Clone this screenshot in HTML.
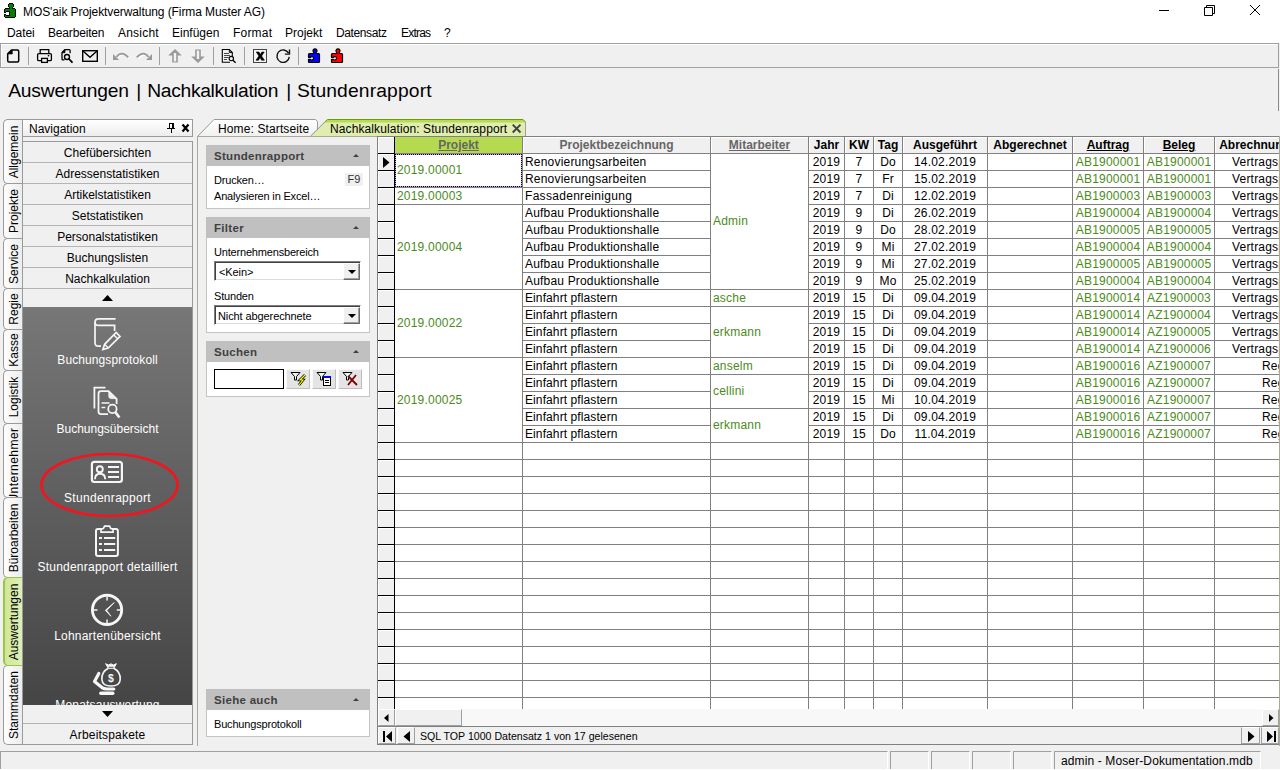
<!DOCTYPE html>
<html lang="de">
<head>
<meta charset="utf-8">
<title>MOS'aik Projektverwaltung (Firma Muster AG)</title>
<style>
*{box-sizing:border-box;margin:0;padding:0}
html,body{width:1280px;height:770px;overflow:hidden;background:#f0f0f0;font-family:"Liberation Sans",sans-serif;font-size:12px;color:#000}
.abs{position:absolute}
#app{position:relative;width:1280px;height:770px;overflow:hidden;background:#f0f0f0}
#titlebar{left:0;top:0;width:1280px;height:22px;background:#fff}
#titlebar .t{left:23px;top:4px;font-size:12px;line-height:16px;white-space:nowrap;letter-spacing:-0.09px}
#menubar{left:0;top:22px;width:1280px;height:21px;background:#fff}
#menubar span{position:absolute;top:3px;font-size:12px;line-height:16px;white-space:nowrap}
#toolbar{left:0;top:43px;width:1279px;height:25px;border:1px solid #a0a0a0;background:#f0f0f0;box-shadow:inset 1px 1px 0 #fff}
#toolbar .sep{position:absolute;top:3px;width:1px;height:17px;background:#a0a0a0}
#toolbar svg{position:absolute}
#heading{left:8px;top:78.6px;font-size:19.25px;line-height:24px;white-space:nowrap}
#heading span{position:absolute;top:0}
/* vertical tabs */
#vtabs{left:3px;top:119px;width:20px;height:626px}
.vt{position:absolute;left:0;width:20px;border:1px solid #9a9a9a;border-right:none;border-radius:5px 0 0 5px;background:linear-gradient(90deg,#fdfdfd,#ececec);overflow:hidden}
.vt span{position:absolute;left:50%;top:50%;white-space:nowrap;font-size:12px;line-height:14px;transform:translate(-50%,-50%) rotate(-90deg)}
.vt.act{background:linear-gradient(90deg,#cfe79a,#dff0b8);border-color:#9dc544;border-left:2px solid #9dc544}
/* nav */
#navhead{left:22px;top:119px;width:171px;height:18px;border:1px solid #9a9a9a;background:linear-gradient(#fff,#ededed);}
#navhead .t{left:6px;top:2px;line-height:14px;font-size:12px}
#navbody{left:22px;top:141px;width:171px;height:604px;border:1px solid #9a9a9a;background:#f0f0f0}
.nb{position:absolute;left:0;width:169px;height:21px;border-bottom:1px solid #b4b4b4;text-align:center;font-size:12px;line-height:22px;white-space:nowrap}
#dark{left:0;top:165px;width:169px;height:398px;background:linear-gradient(#777777,#454545);overflow:hidden}
.ni{position:absolute;left:0;width:169px;text-align:center;color:#fff;font-size:12px;line-height:14px;white-space:nowrap}
.dk svg{position:absolute}
/* tabs */
.tabtxt{position:absolute;font-size:12px;line-height:14px;white-space:nowrap;letter-spacing:0.12px}
/* content */
#content{left:197px;top:136px;width:1083px;height:610px;border-left:1px solid #aca899;border-top:1px solid #aca899}
.pn{position:absolute;left:206px;width:164px}
.pn .h{height:21px;background:#c0c0c0;color:#404040;font-weight:bold;font-size:11.5px;letter-spacing:0.3px;line-height:22px;padding-left:8px;position:relative}
.pn .h i{position:absolute;right:11px;top:9px;width:0;height:0;border:3px solid transparent;border-top:none;border-bottom:3px solid #404040}
.pn .b{background:#fff;border:1px solid #c4c4c4;border-top:none;position:relative}
.pl{position:absolute;left:7px;font-size:11px;line-height:14px;white-space:nowrap;letter-spacing:-0.18px}
.combo{position:absolute;left:7px;width:147px;height:20px;background:#fff;border:1px solid #808080;border-right-color:#fff;border-bottom-color:#fff;box-shadow:inset 1px 1px 0 #404040,inset -1px -1px 0 #dcdcdc}
.combo .t{position:absolute;left:4px;top:3px;letter-spacing:-0.1px;font-size:11px;line-height:14px;white-space:nowrap}
.combo .btn{position:absolute;right:0px;top:1px;width:17px;height:17px;background:#f0f0f0;border:1px solid #fff;border-right-color:#696969;border-bottom-color:#696969;box-shadow:inset -1px -1px 0 #a0a0a0}
.combo .btn i{position:absolute;left:4px;top:6px;width:0;height:0;border:4px solid transparent;border-bottom:none;border-top:4px solid #000}
.sbtn{position:absolute;top:7px;width:24px;height:20px;background:#e4e4e4;border:1px solid #f8f8f8;border-right-color:#bdbdbd;border-bottom-color:#bdbdbd}
/* grid */
#grid{left:377px;top:136px;width:903px;height:573px;background:#fff;border-left:1px solid #808080;border-top:1px solid #808080;overflow:hidden}
.hc{background:#f0f0f0;border-right:1px solid #808080;border-bottom:1px solid #808080;font-weight:bold;text-align:center;line-height:16px;font-size:12px;white-space:nowrap;overflow:hidden;box-shadow:inset 1px 1px 0 #fff}
.hc.hproj{background:#b5d94f;color:#666;box-shadow:none}
.hc.hgray{color:#666}
.hc.u span{text-decoration:underline}
.hsel{background:#f0f0f0;border-right:1px solid #000;width:17px !important;box-shadow:inset 1px 1px 0 #fff}
.vl{width:1px;background:#808080}
.hl{height:1px;background:#808080}
.rsel{background:#f0f0f0;border-right:1px solid #000;width:17px !important;box-shadow:inset 1px 1px 0 #fff}
.rselb{height:1px;background:#000}
.c{background:#fff;white-space:nowrap;overflow:hidden;font-size:12px;letter-spacing:0.2px}
.c.l{padding-left:2px}
.c.ctr{text-align:center}
.c.g{color:#4b8b1b}
.focus0{border:1px solid #c9a0ff}
.focus{border:1px dotted #000}
/* bottom */
#hscroll{left:378px;top:709px;width:901px;height:17px;background:#f8f8f8}
.sb{position:absolute;top:0;height:17px;background:#f0f0f0;border:1px solid #fff;border-right-color:#a0a0a0;border-bottom-color:#a0a0a0}
#recnav{left:377px;top:726px;width:903px;height:19px;border:1px solid #808080;border-left:1px solid #808080;background:#f0f0f0}
.rb{position:absolute;top:0px;height:17px;background:#f0f0f0;border:1px solid #fff;border-right-color:#a0a0a0;border-bottom-color:#a0a0a0}
#status{left:0;top:751px;width:1280px;height:18px}
.sp{position:absolute;top:0;height:18px;border-top:1px solid #a0a0a0;border-left:1px solid #a0a0a0;border-right:1px solid #fff}
</style>
</head>
<body>
<div id="app">
<div id="titlebar" class="abs">
<svg class="abs" style="left:4px;top:3px" width="12" height="15" viewBox="0 0 12 15" shape-rendering="crispEdges"><path d="M5 0h4v1h-4zM4 1h1v1h-1zM9 1h1v1h-1zM4 2h1v1h-1zM9 2h1v1h-1zM4 3h1v1h-1zM9 3h1v1h-1zM5 4h1v1h-1zM8 4h1v1h-1zM1 5h5v1h-5zM8 5h3v1h-3zM0 6h1v1h-1zM11 6h1v1h-1zM0 7h1v1h-1zM11 7h1v1h-1zM0 8h1v1h-1zM2 8h4v1h-4zM11 8h1v1h-1zM0 9h2v1h-2zM5 9h1v1h-1zM11 9h1v1h-1zM5 10h1v1h-1zM11 10h1v1h-1zM0 11h2v1h-2zM5 11h1v1h-1zM11 11h1v1h-1zM0 12h1v1h-1zM2 12h4v1h-4zM11 12h1v1h-1zM0 13h1v1h-1zM11 13h1v1h-1zM1 14h10v1h-10z" fill="#000"/><path d="M5 1h4v1h-4zM5 2h4v1h-4zM5 3h4v1h-4zM6 4h2v1h-2zM6 5h2v1h-2zM1 6h10v1h-10zM1 7h10v1h-10zM1 8h1v1h-1zM6 8h5v1h-5zM6 9h5v1h-5zM6 10h5v1h-5zM6 11h5v1h-5zM1 12h1v1h-1zM6 12h5v1h-5zM1 13h10v1h-10z" fill="#008000"/></svg>
<div class="t abs">MOS'aik Projektverwaltung (Firma Muster AG)</div>
<svg class="abs" style="left:1150px;top:0" width="130" height="22" viewBox="0 0 130 22" fill="none" stroke="#000" stroke-width="1"><path d="M9 10.5h10"/><path d="M54.5 7.5h8v8h-8z M56.5 7.5v-2h8v8h-2"/><path d="M100 5l10 10M110 5l-10 10"/></svg>
</div>
<div id="menubar" class="abs">
<span style="left:7px;letter-spacing:-0.06px">Datei</span><span style="left:48px;letter-spacing:-0.17px">Bearbeiten</span><span style="left:118px;letter-spacing:0.22px">Ansicht</span><span style="left:172px">Einfügen</span><span style="left:233px;letter-spacing:0.2px">Format</span><span style="left:285px">Projekt</span><span style="left:336px;letter-spacing:-0.38px">Datensatz</span><span style="left:401px;letter-spacing:-0.8px">Extras</span><span style="left:444px">?</span>
</div>
<div id="toolbar" class="abs">
<svg style="left:-1px;top:-1px" width="360" height="25" viewBox="0 43 360 25" fill="none">
<g stroke="#a0a0a0" stroke-width="1"><path d="M28.500 47v18M105.500 47v18M159.500 47v18M213.500 47v18M244.500 47v18M298.500 47v18"/></g>
<!-- new -->
<path d="M11.500 50h6q1.200 0 1.200 1.200v9.600q0 1.200 -1.200 1.200h-8.600q-1.200 0 -1.200 -1.200v-7z" stroke="#000" stroke-width="1.500" stroke-linejoin="round"/>
<path d="M12.300 50v4h-4.600z" fill="#000" stroke="#000" stroke-width="0.600"/>
<!-- print -->
<g stroke="#000" stroke-width="1.300">
<path d="M40.200 53.500v-3.800h8.600v3.800"/>
<path d="M41 60.600h-2.200q-1.200 0 -1.200 -1.200v-4.600q0 -1.200 1.200 -1.200h11.400q1.200 0 1.200 1.200v4.600q0 1.200 -1.200 1.200h-2.200"/>
<rect x="41.600" y="58.400" width="5.800" height="4" fill="#f0f0f0"/>
</g>
<rect x="47.800" y="55" width="1.400" height="1.400" fill="#000"/>
<!-- preview -->
<g stroke="#000" stroke-width="1.300">
<path d="M64.500 59.800h-1.600q-0.900 0 -0.900 -0.900v-6.400l2.800 -2.900h4.400q0.900 0 0.900 0.900v2.800"/>
<path d="M64.900 49.800v2.900h-2.700" stroke-width="1"/>
<circle cx="67" cy="57" r="2.500" stroke-width="1.400"/>
<path d="M69 59l3 3.200" stroke-width="1.800" stroke-linecap="round"/>
</g>
<path d="M62 52.600l2.900 -2.900v2.900z" fill="#000"/>
<!-- mail -->
<g stroke="#000" stroke-width="1.400"><rect x="82.700" y="50.700" width="14.600" height="10.600"/><path d="M83 51l7 6.200l7 -6.200"/></g>
<!-- undo/redo (disabled) -->
<g stroke="#fff" stroke-width="1.600" transform="translate(1,1)"><path d="M117 56.500q4.500 -6 11.300 0.800"/><path d="M151.500 56.500q-4.500 -6 -11.300 0.800" transform="translate(-3,0)"/></g>
<g stroke="#9a9a9a" stroke-width="1.700"><path d="M116.500 57q4.800 -6.800 11.800 0.300"/><path d="M148.500 57q-4.800 -6.800 -11.800 0.300"/></g>
<path d="M113 54v6h6z" fill="#9a9a9a"/><path d="M152 54v6h-6z" fill="#9a9a9a"/>
<!-- up / down (disabled) -->
<path d="M168.200 55.500l6.800 -6.500l6.800 6.500h-4v7h-5.600v-7z" fill="#9a9a9a"/><rect x="173.800" y="53" width="2.400" height="8.400" fill="#f4f4f4"/>
<path d="M191.200 56.500l6.800 6.500l6.800 -6.500h-4v-7h-5.600v7z" fill="#9a9a9a"/><rect x="196.800" y="50.600" width="2.400" height="8.400" fill="#f4f4f4"/>
<!-- search doc -->
<g stroke="#000" stroke-width="1.100">
<path d="M230 62.300h-7.700v-12.800h7l3 3v4"/><path d="M229.300 49.500v3h3" stroke-width="0.900"/>
<path d="M224 53.500h5M224 55.500h6M224 57.500h4.500M224 59.500h3" stroke-width="0.900" stroke="#333"/>
<circle cx="231.300" cy="58.600" r="2.200" fill="#f0f0f0"/><path d="M233 60.300l2.600 2.500" stroke-width="1.400"/>
</g>
<!-- X box -->
<rect x="253.500" y="49.500" width="13" height="13" stroke="#444" stroke-width="1" fill="#f4f4f4"/>
<path d="M256.300 52h2.700l1.400 2.600l1.400 -2.600h2.400l-2.600 4l2.800 4.200h-2.800l-1.500 -2.700l-1.600 2.700h-2.500l2.900 -4.200z" fill="#000" stroke="#000" stroke-width="0.600"/>
<!-- refresh -->
<path d="M288.600 53.200a6.200 6.200 0 1 0 0.700 3.600" stroke="#111" stroke-width="1.400"/>
<path d="M289.500 49.500v4.600h-4.600" stroke="#111" stroke-width="1.400"/>
<!-- puzzles -->
<g stroke="#000" stroke-width="1.200" stroke-linejoin="round">
<path transform="translate(307,47)" fill="#0000ff" d="M1.500 10.300V7.500Q1.500 6.500 2.500 6.500H6.800V5.400A2 2 0 1 1 9.200 5.400V6.500H11.500Q12.500 6.500 12.500 7.500V14.500Q12.500 15.500 11.500 15.500H2.500Q1.500 15.500 1.500 14.500V12.300H3.500A1.700 1.700 0 1 0 3.500 10.300Z"/>
<path transform="translate(330,47)" fill="#ff0000" d="M1.500 10.300V7.500Q1.500 6.500 2.500 6.500H6.800V5.400A2 2 0 1 1 9.200 5.400V6.500H11.500Q12.500 6.500 12.500 7.500V14.500Q12.500 15.500 11.500 15.500H2.500Q1.500 15.500 1.500 14.500V12.300H3.500A1.700 1.700 0 1 0 3.500 10.300Z"/>
</g>
</svg>

</div>
<div class="abs" style="left:1278px;top:69px;width:1px;height:42px;background:#8c8c8c"></div>
<div class="abs" style="left:1279px;top:136px;width:1px;height:610px;background:#aca899;z-index:5"></div>
<div id="heading" class="abs"><span style="left:0.2px;letter-spacing:-0.21px">Auswertungen</span><span style="left:128.3px">|</span><span style="left:139.3px;letter-spacing:-0.34px">Nachkalkulation</span><span style="left:278.2px">|</span><span style="left:288.9px;letter-spacing:0.15px">Stundenrapport</span></div>

<div id="vtabs" class="abs">
<div class="vt" style="top:0;height:65px"><span>Allgemein</span></div>
<div class="vt" style="top:64px;height:56px"><span>Projekte</span></div>
<div class="vt" style="top:119px;height:51px"><span>Service</span></div>
<div class="vt" style="top:169px;height:42px"><span>Regie</span></div>
<div class="vt" style="top:210px;height:42px"><span>Kasse</span></div>
<div class="vt" style="top:251px;height:54px"><span>Logistik</span></div>
<div class="vt" style="top:304px;height:75px"><span style="letter-spacing:0.45px;top:calc(50% + 4.5px)">Unternehmer</span></div>
<div class="vt" style="top:378px;height:81px"><span>Büroarbeiten</span></div>
<div class="vt" style="top:546px;height:80px"><span>Stammdaten</span></div>
<div class="vt act" style="top:458px;height:89px"><span>Auswertungen</span></div>
</div>

<div class="abs" style="left:22px;top:119px;width:1px;height:626px;background:#9a9a9a"></div>
<div id="navhead" class="abs"><div class="t abs">Navigation</div>
<svg class="abs" style="left:144px;top:3px" width="24" height="11" viewBox="0 0 24 11"><path d="M2 0.500h5M2.500 0v5M0 5.500h8M4.500 6v4" stroke="#000" stroke-width="1" fill="none"/><rect x="5" y="0" width="2" height="5" fill="#000"/><path d="M15.5 1.5l6 7M21.5 1.5l-6 7" stroke="#000" stroke-width="2.2" fill="none"/></svg>
</div>
<div id="navbody" class="abs">
<div class="nb" style="top:0">Chefübersichten</div>
<div class="nb" style="top:21px">Adressenstatistiken</div>
<div class="nb" style="top:42px">Artikelstatistiken</div>
<div class="nb" style="top:63px">Setstatistiken</div>
<div class="nb" style="top:84px">Personalstatistiken</div>
<div class="nb" style="top:105px">Buchungslisten</div>
<div class="nb" style="top:126px">Nachkalkulation</div>
<svg class="abs" style="left:79px;top:153px" width="11" height="6" viewBox="0 0 11 6"><path d="M0 6L5.5 0L11 6Z" fill="#000"/></svg>
<div id="dark" class="abs dk">
<svg style="left:0;top:0" width="169" height="398" viewBox="23 307 169 398" fill="none" stroke="#f6f6f6" stroke-linecap="butt">
<!-- Buchungsprotokoll -->
<g stroke-width="1.700">
<path d="M115.600 318.800H98.500Q95 318.800 95 322.200V342.800Q95 346.200 98.400 346.200H101"/>
<path d="M95 322.200Q95 325.400 98.500 325.400H114.600V331"/>
<path d="M102.900 349.500L104.600 344.300L116.200 332.400L120 336.400L108.200 348.100Z" stroke-linejoin="miter"/>
<path d="M104.600 344.300L108.200 348.100M113.800 334.900L117.700 338.800" stroke-width="1.400"/>
</g>
<!-- Buchungsübersicht -->
<g stroke-width="1.800">
<path d="M105.500 387.600H94.400V408.500"/>
<path d="M108 414.100H101Q98.500 414.100 98.500 411.600V393.700Q98.500 391.200 101 391.200H108.600L116.600 399V404"/>
<path d="M108.800 391.600V396.300Q108.800 398.600 111.200 398.600H116.200Z" fill="#f0f0f0" stroke-width="0.800"/>
<path d="M101.500 402.900H109.500M101.500 407.500H105.300" stroke-width="1.500"/>
<circle cx="112.400" cy="408.900" r="4.200"/>
<path d="M115.400 412.200L119.400 417.500" stroke-width="2.600"/>
</g>
<!-- Stundenrapport -->
<rect x="91.900" y="461.800" width="30" height="20.200" rx="2.500" stroke-width="2.200"/>
<circle cx="99.800" cy="469.200" r="3" stroke-width="1.900"/>
<path d="M95 479.200Q95 473.700 100 473.700Q105.200 473.700 105.200 479.200" stroke-width="1.900"/>
<path d="M108 467H119M108 472H119M108 477H119" stroke-width="2"/>
<ellipse cx="109.500" cy="485" rx="68" ry="31" stroke="#f4141e" stroke-width="2.700"/>
<!-- Stundenrapport detailliert -->
<rect x="96" y="529" width="21.900" height="27" rx="2" stroke-width="2"/>
<path d="M101 532.200V529.500L103.400 528.400L104.600 526.100H109.500L110.700 528.400L113.100 529.500V532.200Z" stroke-width="1.700" fill="#5b5b5b"/>
<path d="M99 538H102M104 538H115.200M99 544H102M104 544H115.200M99 550H102M104 550H115.200" stroke-width="2"/>
<!-- Lohnartenübersicht -->
<circle cx="107.050" cy="609.900" r="14.600" stroke-width="2.900"/>
<path d="M107.050 597V600.500M107.050 619.500V623M94 609.900H97.500M116.700 609.900H120.200" stroke-width="1.500"/>
<path d="M105.300 610.300L114.200 602.600L106.800 610.400L110.900 616.200Z" fill="#f6f6f6" stroke-width="0.800"/>
<!-- Monatsauswertung -->
<g stroke-width="1.600">
<path d="M108.300 668.300C103 671 101.600 676 101.900 679.700C102.300 684.600 106 686 111 686C116 686 119.800 684.600 120.200 679.700C120.500 676 119 671 113.800 668.300"/>
<path d="M108.300 668.300L105.600 663.700L108.700 665L111 663.800L113.300 665L116.400 663.700L113.800 668.300Z" fill="#f6f6f6" stroke-width="1"/>
<path d="M98.800 673.400L94.500 681.400L102 687.600Q104 689 107 689H113.800" stroke-width="3.200" stroke-linejoin="round" stroke-linecap="round"/>
<path d="M100.800 693.300H112.800" stroke-width="3.400" stroke-linecap="round"/>
</g>
<path d="M108.600 667.300H113.500" stroke="#4a4a4a" stroke-width="0.900"/>
<text x="111" y="682" font-family="Liberation Sans,sans-serif" font-weight="bold" font-size="10.500" text-anchor="middle" fill="#f6f6f6" stroke="none">$</text>
</svg>
<div class="ni" style="top:46px;letter-spacing:0.1px">Buchungsprotokoll</div>
<div class="ni" style="top:115px">Buchungsübersicht</div>
<div class="ni" style="top:184px;letter-spacing:0.3px">Stundenrapport</div>
<div class="ni" style="top:253px;letter-spacing:0.23px">Stundenrapport detailliert</div>
<div class="ni" style="top:322px;letter-spacing:0.22px">Lohnartenübersicht</div>
<div class="ni" style="top:391px;letter-spacing:0.19px">Monatsauswertung</div>

</div>
<svg class="abs" style="left:79px;top:569px" width="11" height="6" viewBox="0 0 11 6"><path d="M0 0L5.5 6L11 0Z" fill="#000"/></svg>
<div class="nb" style="top:581px;border-top:1px solid #b4b4b4;border-bottom:none;height:22px;line-height:23px;letter-spacing:0.200px">Arbeitspakete</div>
</div>

<!-- tab strip -->
<svg class="abs" style="left:196px;top:117px" width="340" height="21" viewBox="0 0 340 21">
<defs><linearGradient id="tg" x1="0" y1="0" x2="0" y2="1"><stop offset="0" stop-color="#ffffff"/><stop offset="1" stop-color="#f0f0f0"/></linearGradient></defs>
<path d="M1.500 19.500L18 2.500H119.500L121.500 4.500V19.500" fill="url(#tg)" stroke="#9a9a9a"/>
<path d="M114.500 19.500L131.500 2.500H327L329.500 5V19.500Z" fill="#dfedae"/>
<path d="M128.500 5.500L131.500 2.500H327L329.500 5V5.500Z" fill="#b8db52"/>
<path d="M114.500 19.200L128.300 5.500" fill="none" stroke="#8e8e8e"/>
<path d="M128.300 5.500L131.500 2.500H327L329.300 4.800" fill="none" stroke="#6a9c00"/>
<path d="M329.500 5V19.500" fill="none" stroke="#a0a0a0"/>
</svg>
<div class="tabtxt" style="left:218px;top:122px">Home: Startseite</div>
<div class="tabtxt" style="left:330px;top:122px;letter-spacing:0.1px">Nachkalkulation: Stundenrapport</div>
<svg class="abs" style="left:511px;top:123px" width="11" height="11" viewBox="0 0 11 11"><path d="M1.700 1.700l7.800 7.800M9.500 1.700l-7.800 7.800" stroke="#404040" stroke-width="1.900"/></svg>

<div id="content" class="abs"></div>

<div class="pn" style="top:145px"><div class="h">Stundenrapport<i></i></div><div class="b" style="height:43px">
<div class="pl" style="top:7px">Drucken…</div><div class="abs" style="left:138px;top:7px;width:18px;height:13px;background:#f0f0f0;font-size:11px;line-height:13px;text-align:center;color:#333">F9</div>
<div class="pl" style="top:23px">Analysieren in Excel…</div></div></div>

<div class="pn" style="top:217px"><div class="h">Filter<i></i></div><div class="b" style="height:95px">
<div class="pl" style="top:7px">Unternehmensbereich</div>
<div class="combo" style="top:23px"><div class="t">&lt;Kein&gt;</div><div class="btn"><i></i></div></div>
<div class="pl" style="top:51px">Stunden</div>
<div class="combo" style="top:67px"><div class="t" style="left:3px">Nicht abgerechnete</div><div class="btn"><i></i></div></div>
</div></div>

<div class="pn" style="top:341px"><div class="h">Suchen<i></i></div><div class="b" style="height:35px">
<div class="abs" style="left:7px;top:7px;width:70px;height:20px;border:1px solid #000;background:#fff"></div>
<div class="sbtn" style="left:79px"><svg width="22" height="18" viewBox="0 0 22 18"><path d="M4 2.500h9l-3.500 4v3.500h-2v-3.500z" fill="#eef4f4" stroke="#000"/><path d="M18 5l-5 5h3l-4 5" stroke="#000" stroke-width="2.600" fill="none"/><path d="M18 5l-5 5h3l-4 5" stroke="#ff0" stroke-width="1.200" fill="none"/></svg></div>
<div class="sbtn" style="left:105px"><svg width="22" height="18" viewBox="0 0 22 18"><path d="M4 2.500h9l-3.500 4v3.500h-2v-3.500z" fill="#eef4f4" stroke="#000"/><rect x="10.500" y="7.500" width="7" height="8" fill="#fff" stroke="#000"/><rect x="10" y="6" width="8" height="2" fill="#00f"/><path d="M12 10.500h4M12 12.500h4" stroke="#000"/></svg></div>
<div class="sbtn" style="left:131px"><svg width="22" height="18" viewBox="0 0 22 18"><path d="M4 2.500h9l-3.500 4v3.500h-2v-3.500z" fill="#eef4f4" stroke="#000"/><path d="M9 6l9 9M17 5l-8 10" stroke="#800000" stroke-width="1.800" fill="none"/></svg></div>
</div></div>

<div class="pn" style="top:689px"><div class="h">Siehe auch<i></i></div><div class="b" style="height:27px">
<div class="pl" style="top:7px">Buchungsprotokoll</div></div></div>

<div id="grid" class="abs">
<div class="abs hsel" style="left:0px;top:0px;width:16px;height:16px"></div>
<div class="abs hc hproj u" style="left:17px;top:0px;width:128px;height:17px"><span>Projekt</span></div>
<div class="abs hc hgray" style="left:145px;top:0px;width:188px;height:17px"><span>Projektbezeichnung</span></div>
<div class="abs hc hgray u" style="left:333px;top:0px;width:98px;height:17px"><span>Mitarbeiter</span></div>
<div class="abs hc" style="left:431px;top:0px;width:36px;height:17px"><span>Jahr</span></div>
<div class="abs hc" style="left:467px;top:0px;width:29px;height:17px"><span>KW</span></div>
<div class="abs hc" style="left:496px;top:0px;width:29px;height:17px"><span>Tag</span></div>
<div class="abs hc" style="left:525px;top:0px;width:85px;height:17px"><span>Ausgeführt</span></div>
<div class="abs hc" style="left:610px;top:0px;width:85px;height:17px"><span>Abgerechnet</span></div>
<div class="abs hc u" style="left:695px;top:0px;width:71px;height:17px"><span>Auftrag</span></div>
<div class="abs hc u" style="left:766px;top:0px;width:71px;height:17px"><span>Beleg</span></div>
<div class="abs hc" style="left:837px;top:0px;width:102px;height:17px"><span>Abrechnungsart</span></div>
<div class="abs vl" style="left:144px;top:17px;height:555px"></div>
<div class="abs vl" style="left:332px;top:17px;height:555px"></div>
<div class="abs vl" style="left:430px;top:17px;height:555px"></div>
<div class="abs vl" style="left:466px;top:17px;height:555px"></div>
<div class="abs vl" style="left:495px;top:17px;height:555px"></div>
<div class="abs vl" style="left:524px;top:17px;height:555px"></div>
<div class="abs vl" style="left:609px;top:17px;height:555px"></div>
<div class="abs vl" style="left:694px;top:17px;height:555px"></div>
<div class="abs vl" style="left:765px;top:17px;height:555px"></div>
<div class="abs vl" style="left:836px;top:17px;height:555px"></div>
<div class="abs vl" style="left:938px;top:17px;height:555px"></div>
<div class="abs hl" style="left:17px;top:33px;width:885px"></div>
<div class="abs hl" style="left:17px;top:50px;width:885px"></div>
<div class="abs hl" style="left:17px;top:67px;width:885px"></div>
<div class="abs hl" style="left:17px;top:84px;width:885px"></div>
<div class="abs hl" style="left:17px;top:101px;width:885px"></div>
<div class="abs hl" style="left:17px;top:118px;width:885px"></div>
<div class="abs hl" style="left:17px;top:135px;width:885px"></div>
<div class="abs hl" style="left:17px;top:152px;width:885px"></div>
<div class="abs hl" style="left:17px;top:169px;width:885px"></div>
<div class="abs hl" style="left:17px;top:186px;width:885px"></div>
<div class="abs hl" style="left:17px;top:203px;width:885px"></div>
<div class="abs hl" style="left:17px;top:220px;width:885px"></div>
<div class="abs hl" style="left:17px;top:237px;width:885px"></div>
<div class="abs hl" style="left:17px;top:254px;width:885px"></div>
<div class="abs hl" style="left:17px;top:271px;width:885px"></div>
<div class="abs hl" style="left:17px;top:288px;width:885px"></div>
<div class="abs hl" style="left:17px;top:305px;width:885px"></div>
<div class="abs hl" style="left:17px;top:322px;width:885px"></div>
<div class="abs hl" style="left:17px;top:339px;width:885px"></div>
<div class="abs hl" style="left:17px;top:356px;width:885px"></div>
<div class="abs hl" style="left:17px;top:373px;width:885px"></div>
<div class="abs hl" style="left:17px;top:390px;width:885px"></div>
<div class="abs hl" style="left:17px;top:407px;width:885px"></div>
<div class="abs hl" style="left:17px;top:424px;width:885px"></div>
<div class="abs hl" style="left:17px;top:441px;width:885px"></div>
<div class="abs hl" style="left:17px;top:458px;width:885px"></div>
<div class="abs hl" style="left:17px;top:475px;width:885px"></div>
<div class="abs hl" style="left:17px;top:492px;width:885px"></div>
<div class="abs hl" style="left:17px;top:509px;width:885px"></div>
<div class="abs hl" style="left:17px;top:526px;width:885px"></div>
<div class="abs hl" style="left:17px;top:543px;width:885px"></div>
<div class="abs hl" style="left:17px;top:560px;width:885px"></div>
<div class="abs rsel" style="left:0px;top:17px;width:16px;height:16px"></div>
<div class="abs rselb" style="left:0px;top:33px;width:17px"></div>
<div class="abs rsel" style="left:0px;top:34px;width:16px;height:16px"></div>
<div class="abs rselb" style="left:0px;top:50px;width:17px"></div>
<div class="abs rsel" style="left:0px;top:51px;width:16px;height:16px"></div>
<div class="abs rselb" style="left:0px;top:67px;width:17px"></div>
<div class="abs rsel" style="left:0px;top:68px;width:16px;height:16px"></div>
<div class="abs rselb" style="left:0px;top:84px;width:17px"></div>
<div class="abs rsel" style="left:0px;top:85px;width:16px;height:16px"></div>
<div class="abs rselb" style="left:0px;top:101px;width:17px"></div>
<div class="abs rsel" style="left:0px;top:102px;width:16px;height:16px"></div>
<div class="abs rselb" style="left:0px;top:118px;width:17px"></div>
<div class="abs rsel" style="left:0px;top:119px;width:16px;height:16px"></div>
<div class="abs rselb" style="left:0px;top:135px;width:17px"></div>
<div class="abs rsel" style="left:0px;top:136px;width:16px;height:16px"></div>
<div class="abs rselb" style="left:0px;top:152px;width:17px"></div>
<div class="abs rsel" style="left:0px;top:153px;width:16px;height:16px"></div>
<div class="abs rselb" style="left:0px;top:169px;width:17px"></div>
<div class="abs rsel" style="left:0px;top:170px;width:16px;height:16px"></div>
<div class="abs rselb" style="left:0px;top:186px;width:17px"></div>
<div class="abs rsel" style="left:0px;top:187px;width:16px;height:16px"></div>
<div class="abs rselb" style="left:0px;top:203px;width:17px"></div>
<div class="abs rsel" style="left:0px;top:204px;width:16px;height:16px"></div>
<div class="abs rselb" style="left:0px;top:220px;width:17px"></div>
<div class="abs rsel" style="left:0px;top:221px;width:16px;height:16px"></div>
<div class="abs rselb" style="left:0px;top:237px;width:17px"></div>
<div class="abs rsel" style="left:0px;top:238px;width:16px;height:16px"></div>
<div class="abs rselb" style="left:0px;top:254px;width:17px"></div>
<div class="abs rsel" style="left:0px;top:255px;width:16px;height:16px"></div>
<div class="abs rselb" style="left:0px;top:271px;width:17px"></div>
<div class="abs rsel" style="left:0px;top:272px;width:16px;height:16px"></div>
<div class="abs rselb" style="left:0px;top:288px;width:17px"></div>
<div class="abs rsel" style="left:0px;top:289px;width:16px;height:16px"></div>
<div class="abs rselb" style="left:0px;top:305px;width:17px"></div>
<div class="abs rsel" style="left:0px;top:306px;width:16px;height:16px"></div>
<div class="abs rselb" style="left:0px;top:322px;width:17px"></div>
<div class="abs rsel" style="left:0px;top:323px;width:16px;height:16px"></div>
<div class="abs rselb" style="left:0px;top:339px;width:17px"></div>
<div class="abs rsel" style="left:0px;top:340px;width:16px;height:16px"></div>
<div class="abs rselb" style="left:0px;top:356px;width:17px"></div>
<div class="abs rsel" style="left:0px;top:357px;width:16px;height:16px"></div>
<div class="abs rselb" style="left:0px;top:373px;width:17px"></div>
<div class="abs rsel" style="left:0px;top:374px;width:16px;height:16px"></div>
<div class="abs rselb" style="left:0px;top:390px;width:17px"></div>
<div class="abs rsel" style="left:0px;top:391px;width:16px;height:16px"></div>
<div class="abs rselb" style="left:0px;top:407px;width:17px"></div>
<div class="abs rsel" style="left:0px;top:408px;width:16px;height:16px"></div>
<div class="abs rselb" style="left:0px;top:424px;width:17px"></div>
<div class="abs rsel" style="left:0px;top:425px;width:16px;height:16px"></div>
<div class="abs rselb" style="left:0px;top:441px;width:17px"></div>
<div class="abs rsel" style="left:0px;top:442px;width:16px;height:16px"></div>
<div class="abs rselb" style="left:0px;top:458px;width:17px"></div>
<div class="abs rsel" style="left:0px;top:459px;width:16px;height:16px"></div>
<div class="abs rselb" style="left:0px;top:475px;width:17px"></div>
<div class="abs rsel" style="left:0px;top:476px;width:16px;height:16px"></div>
<div class="abs rselb" style="left:0px;top:492px;width:17px"></div>
<div class="abs rsel" style="left:0px;top:493px;width:16px;height:16px"></div>
<div class="abs rselb" style="left:0px;top:509px;width:17px"></div>
<div class="abs rsel" style="left:0px;top:510px;width:16px;height:16px"></div>
<div class="abs rselb" style="left:0px;top:526px;width:17px"></div>
<div class="abs rsel" style="left:0px;top:527px;width:16px;height:16px"></div>
<div class="abs rselb" style="left:0px;top:543px;width:17px"></div>
<div class="abs rsel" style="left:0px;top:544px;width:16px;height:16px"></div>
<div class="abs rselb" style="left:0px;top:560px;width:17px"></div>
<div class="abs rsel" style="left:0px;top:561px;width:16px;height:11px"></div>
<div class="abs c g l" style="left:17px;top:17px;width:127px;height:33px;line-height:33px;">2019.00001</div>
<div class="abs c g l" style="left:17px;top:51px;width:127px;height:16px;line-height:16px;">2019.00003</div>
<div class="abs c g l" style="left:17px;top:68px;width:127px;height:84px;line-height:84px;">2019.00004</div>
<div class="abs c g l" style="left:17px;top:153px;width:127px;height:67px;line-height:67px;">2019.00022</div>
<div class="abs c g l" style="left:17px;top:221px;width:127px;height:84px;line-height:84px;">2019.00025</div>
<div class="abs c g l" style="left:333px;top:17px;width:97px;height:135px;line-height:135px;">Admin</div>
<div class="abs c g l" style="left:333px;top:153px;width:97px;height:16px;line-height:16px;">asche</div>
<div class="abs c g l" style="left:333px;top:170px;width:97px;height:50px;line-height:50px;">erkmann</div>
<div class="abs c g l" style="left:333px;top:221px;width:97px;height:16px;line-height:16px;">anselm</div>
<div class="abs c g l" style="left:333px;top:238px;width:97px;height:33px;line-height:33px;">cellini</div>
<div class="abs c g l" style="left:333px;top:272px;width:97px;height:33px;line-height:33px;">erkmann</div>
<div class="abs c l" style="left:145px;top:17px;width:187px;height:16px;line-height:16px;letter-spacing:0.2px">Renovierungsarbeiten</div>
<div class="abs c ctr" style="left:431px;top:17px;width:35px;height:16px;line-height:16px;">2019</div>
<div class="abs c ctr" style="left:467px;top:17px;width:28px;height:16px;line-height:16px;">7</div>
<div class="abs c ctr" style="left:496px;top:17px;width:28px;height:16px;line-height:16px;">Do</div>
<div class="abs c ctr" style="left:525px;top:17px;width:84px;height:16px;line-height:16px;">14.02.2019</div>
<div class="abs c g ctr" style="left:695px;top:17px;width:70px;height:16px;line-height:16px;">AB1900001</div>
<div class="abs c g ctr" style="left:766px;top:17px;width:70px;height:16px;line-height:16px;">AB1900001</div>
<div class="abs c" style="left:854px;top:17px;width:80px;height:16px;line-height:16px">Vertragsposition</div>
<div class="abs c l" style="left:145px;top:34px;width:187px;height:16px;line-height:16px;letter-spacing:0.2px">Renovierungsarbeiten</div>
<div class="abs c ctr" style="left:431px;top:34px;width:35px;height:16px;line-height:16px;">2019</div>
<div class="abs c ctr" style="left:467px;top:34px;width:28px;height:16px;line-height:16px;">7</div>
<div class="abs c ctr" style="left:496px;top:34px;width:28px;height:16px;line-height:16px;">Fr</div>
<div class="abs c ctr" style="left:525px;top:34px;width:84px;height:16px;line-height:16px;">15.02.2019</div>
<div class="abs c g ctr" style="left:695px;top:34px;width:70px;height:16px;line-height:16px;">AB1900001</div>
<div class="abs c g ctr" style="left:766px;top:34px;width:70px;height:16px;line-height:16px;">AB1900001</div>
<div class="abs c" style="left:854px;top:34px;width:80px;height:16px;line-height:16px">Vertragsposition</div>
<div class="abs c l" style="left:145px;top:51px;width:187px;height:16px;line-height:16px;letter-spacing:0.3px">Fassadenreinigung</div>
<div class="abs c ctr" style="left:431px;top:51px;width:35px;height:16px;line-height:16px;">2019</div>
<div class="abs c ctr" style="left:467px;top:51px;width:28px;height:16px;line-height:16px;">7</div>
<div class="abs c ctr" style="left:496px;top:51px;width:28px;height:16px;line-height:16px;">Di</div>
<div class="abs c ctr" style="left:525px;top:51px;width:84px;height:16px;line-height:16px;">12.02.2019</div>
<div class="abs c g ctr" style="left:695px;top:51px;width:70px;height:16px;line-height:16px;">AB1900003</div>
<div class="abs c g ctr" style="left:766px;top:51px;width:70px;height:16px;line-height:16px;">AB1900003</div>
<div class="abs c" style="left:854px;top:51px;width:80px;height:16px;line-height:16px">Vertragsposition</div>
<div class="abs c l" style="left:145px;top:68px;width:187px;height:16px;line-height:16px;letter-spacing:0.18px">Aufbau Produktionshalle</div>
<div class="abs c ctr" style="left:431px;top:68px;width:35px;height:16px;line-height:16px;">2019</div>
<div class="abs c ctr" style="left:467px;top:68px;width:28px;height:16px;line-height:16px;">9</div>
<div class="abs c ctr" style="left:496px;top:68px;width:28px;height:16px;line-height:16px;">Di</div>
<div class="abs c ctr" style="left:525px;top:68px;width:84px;height:16px;line-height:16px;">26.02.2019</div>
<div class="abs c g ctr" style="left:695px;top:68px;width:70px;height:16px;line-height:16px;">AB1900004</div>
<div class="abs c g ctr" style="left:766px;top:68px;width:70px;height:16px;line-height:16px;">AB1900004</div>
<div class="abs c" style="left:854px;top:68px;width:80px;height:16px;line-height:16px">Vertragsposition</div>
<div class="abs c l" style="left:145px;top:85px;width:187px;height:16px;line-height:16px;letter-spacing:0.18px">Aufbau Produktionshalle</div>
<div class="abs c ctr" style="left:431px;top:85px;width:35px;height:16px;line-height:16px;">2019</div>
<div class="abs c ctr" style="left:467px;top:85px;width:28px;height:16px;line-height:16px;">9</div>
<div class="abs c ctr" style="left:496px;top:85px;width:28px;height:16px;line-height:16px;">Do</div>
<div class="abs c ctr" style="left:525px;top:85px;width:84px;height:16px;line-height:16px;">28.02.2019</div>
<div class="abs c g ctr" style="left:695px;top:85px;width:70px;height:16px;line-height:16px;">AB1900005</div>
<div class="abs c g ctr" style="left:766px;top:85px;width:70px;height:16px;line-height:16px;">AB1900005</div>
<div class="abs c" style="left:854px;top:85px;width:80px;height:16px;line-height:16px">Vertragsposition</div>
<div class="abs c l" style="left:145px;top:102px;width:187px;height:16px;line-height:16px;letter-spacing:0.18px">Aufbau Produktionshalle</div>
<div class="abs c ctr" style="left:431px;top:102px;width:35px;height:16px;line-height:16px;">2019</div>
<div class="abs c ctr" style="left:467px;top:102px;width:28px;height:16px;line-height:16px;">9</div>
<div class="abs c ctr" style="left:496px;top:102px;width:28px;height:16px;line-height:16px;">Mi</div>
<div class="abs c ctr" style="left:525px;top:102px;width:84px;height:16px;line-height:16px;">27.02.2019</div>
<div class="abs c g ctr" style="left:695px;top:102px;width:70px;height:16px;line-height:16px;">AB1900004</div>
<div class="abs c g ctr" style="left:766px;top:102px;width:70px;height:16px;line-height:16px;">AB1900004</div>
<div class="abs c" style="left:854px;top:102px;width:80px;height:16px;line-height:16px">Vertragsposition</div>
<div class="abs c l" style="left:145px;top:119px;width:187px;height:16px;line-height:16px;letter-spacing:0.18px">Aufbau Produktionshalle</div>
<div class="abs c ctr" style="left:431px;top:119px;width:35px;height:16px;line-height:16px;">2019</div>
<div class="abs c ctr" style="left:467px;top:119px;width:28px;height:16px;line-height:16px;">9</div>
<div class="abs c ctr" style="left:496px;top:119px;width:28px;height:16px;line-height:16px;">Mi</div>
<div class="abs c ctr" style="left:525px;top:119px;width:84px;height:16px;line-height:16px;">27.02.2019</div>
<div class="abs c g ctr" style="left:695px;top:119px;width:70px;height:16px;line-height:16px;">AB1900005</div>
<div class="abs c g ctr" style="left:766px;top:119px;width:70px;height:16px;line-height:16px;">AB1900005</div>
<div class="abs c" style="left:854px;top:119px;width:80px;height:16px;line-height:16px">Vertragsposition</div>
<div class="abs c l" style="left:145px;top:136px;width:187px;height:16px;line-height:16px;letter-spacing:0.18px">Aufbau Produktionshalle</div>
<div class="abs c ctr" style="left:431px;top:136px;width:35px;height:16px;line-height:16px;">2019</div>
<div class="abs c ctr" style="left:467px;top:136px;width:28px;height:16px;line-height:16px;">9</div>
<div class="abs c ctr" style="left:496px;top:136px;width:28px;height:16px;line-height:16px;">Mo</div>
<div class="abs c ctr" style="left:525px;top:136px;width:84px;height:16px;line-height:16px;">25.02.2019</div>
<div class="abs c g ctr" style="left:695px;top:136px;width:70px;height:16px;line-height:16px;">AB1900004</div>
<div class="abs c g ctr" style="left:766px;top:136px;width:70px;height:16px;line-height:16px;">AB1900004</div>
<div class="abs c" style="left:854px;top:136px;width:80px;height:16px;line-height:16px">Vertragsposition</div>
<div class="abs c l" style="left:145px;top:153px;width:187px;height:16px;line-height:16px;letter-spacing:0.1px">Einfahrt pflastern</div>
<div class="abs c ctr" style="left:431px;top:153px;width:35px;height:16px;line-height:16px;">2019</div>
<div class="abs c ctr" style="left:467px;top:153px;width:28px;height:16px;line-height:16px;">15</div>
<div class="abs c ctr" style="left:496px;top:153px;width:28px;height:16px;line-height:16px;">Di</div>
<div class="abs c ctr" style="left:525px;top:153px;width:84px;height:16px;line-height:16px;">09.04.2019</div>
<div class="abs c g ctr" style="left:695px;top:153px;width:70px;height:16px;line-height:16px;">AB1900014</div>
<div class="abs c g ctr" style="left:766px;top:153px;width:70px;height:16px;line-height:16px;">AZ1900003</div>
<div class="abs c" style="left:854px;top:153px;width:80px;height:16px;line-height:16px">Vertragsposition</div>
<div class="abs c l" style="left:145px;top:170px;width:187px;height:16px;line-height:16px;letter-spacing:0.1px">Einfahrt pflastern</div>
<div class="abs c ctr" style="left:431px;top:170px;width:35px;height:16px;line-height:16px;">2019</div>
<div class="abs c ctr" style="left:467px;top:170px;width:28px;height:16px;line-height:16px;">15</div>
<div class="abs c ctr" style="left:496px;top:170px;width:28px;height:16px;line-height:16px;">Di</div>
<div class="abs c ctr" style="left:525px;top:170px;width:84px;height:16px;line-height:16px;">09.04.2019</div>
<div class="abs c g ctr" style="left:695px;top:170px;width:70px;height:16px;line-height:16px;">AB1900014</div>
<div class="abs c g ctr" style="left:766px;top:170px;width:70px;height:16px;line-height:16px;">AZ1900004</div>
<div class="abs c" style="left:854px;top:170px;width:80px;height:16px;line-height:16px">Vertragsposition</div>
<div class="abs c l" style="left:145px;top:187px;width:187px;height:16px;line-height:16px;letter-spacing:0.1px">Einfahrt pflastern</div>
<div class="abs c ctr" style="left:431px;top:187px;width:35px;height:16px;line-height:16px;">2019</div>
<div class="abs c ctr" style="left:467px;top:187px;width:28px;height:16px;line-height:16px;">15</div>
<div class="abs c ctr" style="left:496px;top:187px;width:28px;height:16px;line-height:16px;">Di</div>
<div class="abs c ctr" style="left:525px;top:187px;width:84px;height:16px;line-height:16px;">09.04.2019</div>
<div class="abs c g ctr" style="left:695px;top:187px;width:70px;height:16px;line-height:16px;">AB1900014</div>
<div class="abs c g ctr" style="left:766px;top:187px;width:70px;height:16px;line-height:16px;">AZ1900005</div>
<div class="abs c" style="left:854px;top:187px;width:80px;height:16px;line-height:16px">Vertragsposition</div>
<div class="abs c l" style="left:145px;top:204px;width:187px;height:16px;line-height:16px;letter-spacing:0.1px">Einfahrt pflastern</div>
<div class="abs c ctr" style="left:431px;top:204px;width:35px;height:16px;line-height:16px;">2019</div>
<div class="abs c ctr" style="left:467px;top:204px;width:28px;height:16px;line-height:16px;">15</div>
<div class="abs c ctr" style="left:496px;top:204px;width:28px;height:16px;line-height:16px;">Di</div>
<div class="abs c ctr" style="left:525px;top:204px;width:84px;height:16px;line-height:16px;">09.04.2019</div>
<div class="abs c g ctr" style="left:695px;top:204px;width:70px;height:16px;line-height:16px;">AB1900014</div>
<div class="abs c g ctr" style="left:766px;top:204px;width:70px;height:16px;line-height:16px;">AZ1900006</div>
<div class="abs c" style="left:854px;top:204px;width:80px;height:16px;line-height:16px">Vertragsposition</div>
<div class="abs c l" style="left:145px;top:221px;width:187px;height:16px;line-height:16px;letter-spacing:0.1px">Einfahrt pflastern</div>
<div class="abs c ctr" style="left:431px;top:221px;width:35px;height:16px;line-height:16px;">2019</div>
<div class="abs c ctr" style="left:467px;top:221px;width:28px;height:16px;line-height:16px;">15</div>
<div class="abs c ctr" style="left:496px;top:221px;width:28px;height:16px;line-height:16px;">Di</div>
<div class="abs c ctr" style="left:525px;top:221px;width:84px;height:16px;line-height:16px;">09.04.2019</div>
<div class="abs c g ctr" style="left:695px;top:221px;width:70px;height:16px;line-height:16px;">AB1900016</div>
<div class="abs c g ctr" style="left:766px;top:221px;width:70px;height:16px;line-height:16px;">AZ1900007</div>
<div class="abs c" style="left:884px;top:221px;width:60px;height:16px;line-height:16px">Regie</div>
<div class="abs c l" style="left:145px;top:238px;width:187px;height:16px;line-height:16px;letter-spacing:0.1px">Einfahrt pflastern</div>
<div class="abs c ctr" style="left:431px;top:238px;width:35px;height:16px;line-height:16px;">2019</div>
<div class="abs c ctr" style="left:467px;top:238px;width:28px;height:16px;line-height:16px;">15</div>
<div class="abs c ctr" style="left:496px;top:238px;width:28px;height:16px;line-height:16px;">Di</div>
<div class="abs c ctr" style="left:525px;top:238px;width:84px;height:16px;line-height:16px;">09.04.2019</div>
<div class="abs c g ctr" style="left:695px;top:238px;width:70px;height:16px;line-height:16px;">AB1900016</div>
<div class="abs c g ctr" style="left:766px;top:238px;width:70px;height:16px;line-height:16px;">AZ1900007</div>
<div class="abs c" style="left:884px;top:238px;width:60px;height:16px;line-height:16px">Regie</div>
<div class="abs c l" style="left:145px;top:255px;width:187px;height:16px;line-height:16px;letter-spacing:0.1px">Einfahrt pflastern</div>
<div class="abs c ctr" style="left:431px;top:255px;width:35px;height:16px;line-height:16px;">2019</div>
<div class="abs c ctr" style="left:467px;top:255px;width:28px;height:16px;line-height:16px;">15</div>
<div class="abs c ctr" style="left:496px;top:255px;width:28px;height:16px;line-height:16px;">Mi</div>
<div class="abs c ctr" style="left:525px;top:255px;width:84px;height:16px;line-height:16px;">10.04.2019</div>
<div class="abs c g ctr" style="left:695px;top:255px;width:70px;height:16px;line-height:16px;">AB1900016</div>
<div class="abs c g ctr" style="left:766px;top:255px;width:70px;height:16px;line-height:16px;">AZ1900007</div>
<div class="abs c" style="left:884px;top:255px;width:60px;height:16px;line-height:16px">Regie</div>
<div class="abs c l" style="left:145px;top:272px;width:187px;height:16px;line-height:16px;letter-spacing:0.1px">Einfahrt pflastern</div>
<div class="abs c ctr" style="left:431px;top:272px;width:35px;height:16px;line-height:16px;">2019</div>
<div class="abs c ctr" style="left:467px;top:272px;width:28px;height:16px;line-height:16px;">15</div>
<div class="abs c ctr" style="left:496px;top:272px;width:28px;height:16px;line-height:16px;">Di</div>
<div class="abs c ctr" style="left:525px;top:272px;width:84px;height:16px;line-height:16px;">09.04.2019</div>
<div class="abs c g ctr" style="left:695px;top:272px;width:70px;height:16px;line-height:16px;">AB1900016</div>
<div class="abs c g ctr" style="left:766px;top:272px;width:70px;height:16px;line-height:16px;">AZ1900007</div>
<div class="abs c" style="left:884px;top:272px;width:60px;height:16px;line-height:16px">Regie</div>
<div class="abs c l" style="left:145px;top:289px;width:187px;height:16px;line-height:16px;letter-spacing:0.1px">Einfahrt pflastern</div>
<div class="abs c ctr" style="left:431px;top:289px;width:35px;height:16px;line-height:16px;">2019</div>
<div class="abs c ctr" style="left:467px;top:289px;width:28px;height:16px;line-height:16px;">15</div>
<div class="abs c ctr" style="left:496px;top:289px;width:28px;height:16px;line-height:16px;">Do</div>
<div class="abs c ctr" style="left:525px;top:289px;width:84px;height:16px;line-height:16px;">11.04.2019</div>
<div class="abs c g ctr" style="left:695px;top:289px;width:70px;height:16px;line-height:16px;">AB1900016</div>
<div class="abs c g ctr" style="left:766px;top:289px;width:70px;height:16px;line-height:16px;">AZ1900007</div>
<div class="abs c" style="left:884px;top:289px;width:60px;height:16px;line-height:16px">Regie</div>
<div class="abs focus0" style="left:17px;top:17px;width:127px;height:33px"></div>
<div class="abs focus" style="left:17px;top:17px;width:127px;height:33px"></div>
<div class="abs rselb" style="left:0px;top:16px;width:17px"></div>
<svg class="abs" style="left:5px;top:20px" width="7" height="11" viewBox="0 0 7 11"><path d="M0 0 L6.5 5.5 L0 11Z" fill="#000"/></svg>
</div>

<div class="abs" style="left:377px;top:709px;width:1px;height:18px;background:#808080"></div>
<div id="hscroll" class="abs">
<div class="sb" style="left:0;width:17px"><svg class="abs" style="left:5px;top:4px" width="5" height="8" viewBox="0 0 5 8"><path d="M4.500 0L0 4L4.500 8Z" fill="#000"/></svg></div>
<div class="sb" style="left:17px;width:67px"></div>
<div class="sb" style="left:884px;width:17px"><svg class="abs" style="left:6px;top:4px" width="5" height="8" viewBox="0 0 5 8"><path d="M0 0L4.500 4L0 8Z" fill="#000"/></svg></div>
</div>
<div id="recnav" class="abs">
<div class="rb" style="left:0;width:18px"><svg class="abs" style="left:4px;top:3px" width="9" height="11" viewBox="0 0 9 11"><path d="M0 0h2v11H0zM9 0L3 5.500L9 11Z" fill="#000"/></svg></div>
<div class="rb" style="left:19px;width:18px"><svg class="abs" style="left:5px;top:3px" width="7" height="11" viewBox="0 0 7 11"><path d="M7 0L0.500 5.500L7 11Z" fill="#000"/></svg></div>
<div class="abs" style="left:42px;top:2px;font-size:10.600px;line-height:15px;white-space:nowrap">SQL TOP 1000 Datensatz 1 von 17 gelesenen</div>
<div class="rb" style="left:863px;width:19px;border-left-color:#a0a0a0"><svg class="abs" style="left:6px;top:3px" width="7" height="11" viewBox="0 0 7 11"><path d="M0 0L6.500 5.500L0 11Z" fill="#000"/></svg></div>
<div class="rb" style="left:883px;width:18px;border-left-color:#a0a0a0"><svg class="abs" style="left:5px;top:3px" width="9" height="11" viewBox="0 0 9 11"><path d="M7 0h2v11H7zM0 0L6 5.500L0 11Z" fill="#000"/></svg></div>
</div>

<div class="abs" style="left:0;top:769px;width:1280px;height:1px;background:#fff"></div>
<div id="status" class="abs">
<div class="sp" style="left:0;width:888px"></div>
<div class="sp" style="left:890px;width:39px"></div>
<div class="sp" style="left:931px;width:39px"></div>
<div class="sp" style="left:972px;width:39px"></div>
<div class="sp" style="left:1013px;width:39px"></div>
<div class="sp" style="left:1054px;width:207px"><div class="abs" style="left:6px;top:2px;font-size:12px;line-height:14px;white-space:nowrap;letter-spacing:0.120px">admin - Moser-Dokumentation.mdb</div></div>
</div>
</div>
</body>
</html>
